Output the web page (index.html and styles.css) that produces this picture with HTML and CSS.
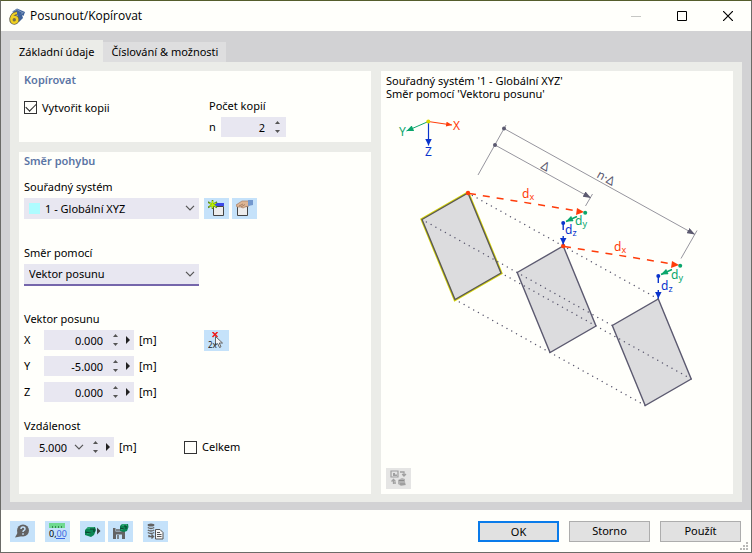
FILE: index.html
```html
<!DOCTYPE html>
<html lang="cs">
<head>
<meta charset="utf-8">
<title>Posunout/Kopírovat</title>
<link rel="stylesheet" href="styles.css">
</head>
<body>
<svg class="defs" width="0" height="0" aria-hidden="true">
  <defs>
    <symbol id="chevron" viewBox="0 0 10 6"><path d="M1 .8 5 4.8 9 .8" fill="none" stroke="#555" stroke-width="1.2"/></symbol>
    <symbol id="up" viewBox="0 0 5 3"><path d="M0 3 2.5 0 5 3Z" fill="#555"/></symbol>
    <symbol id="down" viewBox="0 0 5 3"><path d="M0 0 2.5 3 5 0Z" fill="#555"/></symbol>
    <symbol id="right" viewBox="0 0 4 8"><path d="M0 0 4 4 0 8Z" fill="#222"/></symbol>
  </defs>
</svg>
<div class="window">
  <header class="titlebar">
    <svg class="app-icon" width="16" height="17" viewBox="0 0 16 17" aria-hidden="true">
      <path d="M3 4 8 .5 16 4 14.500 8 13 7 14 10 10 14 8 6Z" fill="#3f6299"/>
      <path d="M4 3.500 8 1.500 14 5M12 6.500 14.500 4" fill="none" stroke="#7d98bd"/>
      <circle cx="5.300" cy="11.700" r="3" fill="#66624d" stroke="#66624d" stroke-width="4"/>
      <path d="M8 5Q3 5.500 2.200 11" fill="none" stroke="#66624d" stroke-width="3.600"/>
      <path d="M8 5Q3 5.500 2.200 11" fill="none" stroke="#f0d020" stroke-width="2.200"/>
      <circle cx="5.300" cy="11.800" r="2.900" fill="#77704a" stroke="#f0d020" stroke-width="2.400"/>
    </svg>
    <h1 class="title">Posunout/Kopírovat</h1>
    <div class="window-buttons">
      <button class="win-btn" type="button" aria-label="Minimalizovat" disabled><svg width="10" height="10" viewBox="0 0 10 10"><path d="M0 5.500H10" stroke="#c6c7c4"/></svg></button>
      <button class="win-btn" type="button" aria-label="Maximalizovat"><svg width="10" height="10" viewBox="0 0 10 10"><path d="M.5.5H9.500V9.500H.5Z" fill="none" stroke="#000"/></svg></button>
      <button class="win-btn" type="button" aria-label="Zavřít"><svg width="10" height="10" viewBox="0 0 10 10"><path d="M0 0 10 10M10 0 0 10" stroke="#000" stroke-width="1.200"/></svg></button>
    </div>
  </header>

  <main class="body">
    <div class="tabs" role="tablist">
      <button class="tab tab-active" role="tab" aria-selected="true" type="button">Základní údaje</button>
      <button class="tab" role="tab" aria-selected="false" type="button">Číslování &amp; možnosti</button>
    </div>
    <div class="page" role="tabpanel">
      <div class="column">
        <section class="panel">
          <h2 class="heading">Kopírovat</h2>
          <div class="copy-row">
            <label class="check"><input type="checkbox" checked>Vytvořit kopii</label>
            <div class="copies">
              <label class="label" for="count">Počet kopií</label>
              <div class="row">
                <label class="count-name" for="count">n</label>
                <div class="spin spin-count">
                  <input id="count" type="text" value="2">
                  <span class="steps"><button type="button" aria-label="Více"><svg width="5" height="3"><use href="#up"/></svg></button><button type="button" aria-label="Méně"><svg width="5" height="3"><use href="#down"/></svg></button></span>
                </div>
              </div>
            </div>
          </div>
        </section>

        <section class="panel panel-grow">
          <h2 class="heading">Směr pohybu</h2>
          <div class="field">
            <label class="label" for="system">Souřadný systém</label>
            <div class="row">
              <div class="select has-chip">
                <span class="chip"></span>
                <select id="system"><option>1 - Globální XYZ</option></select>
                <svg class="chevron" width="10" height="6"><use href="#chevron"/></svg>
              </div>
              <div class="tools">
                <button class="tool" type="button" aria-label="Nový souřadný systém">
                  <svg width="17" height="17" viewBox="0 0 17 17"><path d="M5 3H16V6H5Z" fill="#3b49e8"/><path d="M5.500 6.500H15.500V15.500H5.500Z" fill="#ececec" stroke="#444"/><path d="M4.500 0V9M0 2 9 7.500M9 2 0 7.500" stroke="#5b8a1c" stroke-width="1.600"/><path d="M4.500 1V8M1.500 3 8 6.500M8 3 1.500 6.500" stroke="#b8f000" stroke-width="1.300"/></svg>
                </button>
                <button class="tool" type="button" aria-label="Upravit souřadný systém">
                  <svg width="17" height="17" viewBox="0 0 17 17"><path d="M1 4H12V7H1Z" fill="#3b49e8"/><path d="M1.500 6.500H11.500V15.500H1.500Z" fill="#ececec" stroke="#444"/><path d="M0 5 6 1 13 1 13 6 9 7 7 8 5 7 1 7Z" fill="#ddb594" stroke="#a67e64" stroke-width=".7"/><path d="M3 6 7 4M5 7 9 4.500" stroke="#9a735b" stroke-width=".8"/><path d="M12 0H17V5L12 6Z" fill="#7398ce"/></svg>
                </button>
              </div>
            </div>
          </div>
          <div class="field">
            <label class="label" for="direction">Směr pomocí</label>
            <div class="select select-focus">
              <select id="direction"><option>Vektor posunu</option></select>
              <svg class="chevron" width="10" height="6"><use href="#chevron"/></svg>
            </div>
          </div>
          <fieldset class="vector">
            <legend class="label">Vektor posunu</legend>
            <div class="vector-row">
              <div class="vector-inputs">
                <div class="row"><label class="axis" for="vx">X</label>
                  <div class="spin"><input id="vx" type="text" value="0.000"><span class="steps"><button type="button" aria-label="Více"><svg width="5" height="3"><use href="#up"/></svg></button><button type="button" aria-label="Méně"><svg width="5" height="3"><use href="#down"/></svg></button></span><button class="more" type="button" aria-label="Možnosti X"><svg width="4" height="8"><use href="#right"/></svg></button></div>
                  <span class="unit">[m]</span></div>
                <div class="row"><label class="axis" for="vy">Y</label>
                  <div class="spin"><input id="vy" type="text" value="-5.000"><span class="steps"><button type="button" aria-label="Více"><svg width="5" height="3"><use href="#up"/></svg></button><button type="button" aria-label="Méně"><svg width="5" height="3"><use href="#down"/></svg></button></span><button class="more" type="button" aria-label="Možnosti Y"><svg width="4" height="8"><use href="#right"/></svg></button></div>
                  <span class="unit">[m]</span></div>
                <div class="row"><label class="axis" for="vz">Z</label>
                  <div class="spin"><input id="vz" type="text" value="0.000"><span class="steps"><button type="button" aria-label="Více"><svg width="5" height="3"><use href="#up"/></svg></button><button type="button" aria-label="Méně"><svg width="5" height="3"><use href="#down"/></svg></button></span><button class="more" type="button" aria-label="Možnosti Z"><svg width="4" height="8"><use href="#right"/></svg></button></div>
                  <span class="unit">[m]</span></div>
              </div>
              <button class="tool" type="button" aria-label="Vybrat dva body">
                <svg width="17" height="17" viewBox="0 0 17 17"><path d="M4.500 0 9.500 5M9.500 0 4.500 5" stroke="#f01818" stroke-width="1.500"/><path d="M7.500 4.500V13.500L9.700 11.500 11.500 15.500 13 14.800 11.300 11H14.500Z" fill="#f4f4f6" stroke="#555" stroke-width=".9"/><text x="0" y="15.500" class="two-x">2x</text></svg>
              </button>
            </div>
          </fieldset>
          <div class="field">
            <label class="label" for="distance">Vzdálenost</label>
            <div class="row distance-row">
              <div class="distance">
                <div class="spin spin-distance">
                  <input id="distance" type="text" value="5.000">
                  <button class="drop" type="button" aria-label="Seznam hodnot"><svg width="10" height="6"><use href="#chevron"/></svg></button>
                  <span class="steps"><button type="button" aria-label="Více"><svg width="5" height="3"><use href="#up"/></svg></button><button type="button" aria-label="Méně"><svg width="5" height="3"><use href="#down"/></svg></button></span>
                  <button class="more" type="button" aria-label="Možnosti vzdálenosti"><svg width="4" height="8"><use href="#right"/></svg></button>
                </div>
                <span class="unit">[m]</span>
              </div>
              <label class="check"><input type="checkbox">Celkem</label>
            </div>
          </div>
        </section>
      </div>

      <section class="panel preview">
        <p class="caption">Souřadný systém '1 - Globální XYZ'<br>Směr pomocí 'Vektoru posunu'</p>
        <svg class="diagram" viewBox="381 101 352 366" role="img" aria-label="Schéma posunu">
          <defs>
            <marker id="grey" viewBox="0 0 8 6" refX="8" refY="3" markerWidth="8" markerHeight="6" markerUnits="userSpaceOnUse" orient="auto"><path d="M0 0 8 3 0 6Z" fill="#5c5a70"/></marker>
            <marker id="red" viewBox="0 0 7 6" refX="7" refY="3" markerWidth="7" markerHeight="5" markerUnits="userSpaceOnUse" orient="auto"><path d="M0 0 7 3 0 6Z" fill="#ff3c0a"/></marker>
            <marker id="green" viewBox="0 0 7 6" refX="7" refY="3" markerWidth="8" markerHeight="6" markerUnits="userSpaceOnUse" orient="auto"><path d="M0 0 7 3 0 6Z" fill="#0aa66c"/></marker>
            <marker id="blue" viewBox="0 0 7 7" refX="7" refY="3.500" markerWidth="7" markerHeight="7" markerUnits="userSpaceOnUse" orient="auto"><path d="M0 0 7 3.500 0 7Z" fill="#0a34cc"/></marker>
          </defs>
          <g fill="none">
            <path d="M428.300 121.500 452 125" stroke="#ff3c0a" marker-end="url(#red)"/>
            <path d="M428.300 121.500 406.500 131" stroke="#0aa66c" marker-end="url(#green)"/>
            <path d="M428.500 121.500V145.500" stroke="#0a34cc" stroke-width="1.200" marker-end="url(#blue)"/>
          </g>
          <circle cx="428.300" cy="121.500" r="2" fill="#dbd800"/>
          <text class="t red" x="453" y="130">X</text>
          <text class="t green" x="399" y="136">Y</text>
          <text class="t blue" x="425" y="156">Z</text>

          <g fill="none" stroke="#96959e">
            <path d="M506 125 478 175M592.500 194 585.500 206M697 230.500 681 258.500"/>
            <path d="M504 128.500 695 234.500" marker-end="url(#grey)"/>
            <path d="M495 145 591 198" marker-end="url(#grey)"/>
          </g>
          <circle cx="504" cy="128.500" r="2" fill="#5c5a70"/>
          <circle cx="495" cy="145" r="2" fill="#5c5a70"/>
          <text class="t delta" transform="translate(540 168) rotate(29)">Δ</text>
          <text class="t delta" transform="translate(596 177) rotate(29)">n·Δ</text>

          <g fill="#dcdcde" stroke-linejoin="miter">
            <path d="M468 193 501 273 455 299.500 422 219.500Z" stroke="#d8d60a" stroke-width="3"/>
            <path d="M468 193 501 273 455 299.500 422 219.500Z" stroke="#5c5a50" stroke-width="1.400"/>
            <path d="M563.200 246 596 326 550 352.500 517.200 272.500Z" stroke="#5c5a70" stroke-width="1.400"/>
            <path d="M658.300 299 691.200 379 645.200 405.500 612.300 325.500Z" stroke="#5c5a70" stroke-width="1.400"/>
          </g>
          <g stroke="#5c5a70" stroke-width="1.500" stroke-linecap="round" stroke-dasharray="0 5.450" stroke-dashoffset="-5">
            <path d="M468 193 658.300 299"/><path d="M422 219.500 612.300 325.500"/><path d="M501 273 691.200 379"/><path d="M455 299.500 645.200 405.500"/>
          </g>

          <g stroke="#ff3c0a" stroke-width="1.500" stroke-dasharray="7 7" fill="none">
            <path d="M469 193.500 578 211"/><path d="M564 246.500 673 264"/>
          </g>
          <path d="M577 208 584 212 576 215ZM672 261 679 265 671 268Z" fill="#ff3c0a"/>
          <circle cx="468" cy="193" r="2.200" fill="#ff3c0a"/>
          <circle cx="563.200" cy="246" r="2.200" fill="#ff3c0a"/>
          <g fill="none" stroke="#0aa66c" stroke-width="1.500">
            <path d="M577 216.500 566 221.500" marker-end="url(#green)"/><path d="M672 269.500 661 274.500" marker-end="url(#green)"/>
          </g>
          <g fill="none" stroke="#0a34cc" stroke-width="1.400">
            <path d="M563.200 223V230M563.200 236V244.500" marker-end="url(#blue)"/><path d="M658.300 276V283M658.300 290V298.500" marker-end="url(#blue)"/>
          </g>
          <circle cx="585.200" cy="212.700" r="2" fill="#0aa66c"/><circle cx="680.200" cy="265.700" r="2" fill="#0aa66c"/>
          <circle cx="563.200" cy="223" r="2" fill="#0a34cc"/><circle cx="658.300" cy="276" r="2" fill="#0a34cc"/>
          <text class="t red" x="522" y="198">d<tspan class="sub" dy="2">x</tspan></text>
          <text class="t red" x="614" y="251">d<tspan class="sub" dy="2">x</tspan></text>
          <text class="t green" x="575" y="225">d<tspan class="sub" dy="2">y</tspan></text>
          <text class="t green" x="671" y="279">d<tspan class="sub" dy="2">y</tspan></text>
          <text class="t blue" x="565" y="234">d<tspan class="sub" dy="2">z</tspan></text>
          <text class="t blue" x="661" y="290">d<tspan class="sub" dy="2">z</tspan></text>
        </svg>
        <button class="tool tool-off" type="button" aria-label="Přepnout zobrazení" disabled>
          <svg width="17" height="17" viewBox="0 0 17 17"><path d="M1 1H8V7H1Z" fill="none" stroke="#a0a0a0" stroke-width="1.200"/><path d="M3 6V3H5V4.500H7V6Z" fill="#a0a0a0"/><path d="M10 2H14V5M12.200 4 14 6 16 4M3.500 14V10M1.500 11.500 3.500 9.500 5.500 11.500M3.500 13H6" fill="none" stroke="#a0a0a0" stroke-width="1.300"/><path d="M8 10 12 8 15 9V12L16 15 11 16 8 14Z" fill="#b2b2b2"/><path d="M9 10.500H14M10 14H15" stroke="#8c8c8c"/></svg>
        </button>
      </section>
    </div>
  </main>

  <footer class="footer">
    <div class="footer-tools">
      <button class="tool" type="button" aria-label="Nápověda">
        <svg width="17" height="17" viewBox="0 0 17 17"><circle cx="9" cy="7.500" r="6" fill="#636363"/><path d="M4 9 1 14.500 9 13Z" fill="#636363"/><path d="M7 6Q7 4 9 4T11 6Q11 7 9.700 7.600Q9 8 9 9" fill="none" stroke="#c5e2fa" stroke-width="1.500"/><path d="M9 10.200V11.700" stroke="#c5e2fa" stroke-width="1.600"/></svg>
      </button>
      <button class="tool" type="button" aria-label="Jednotky a desetinná místa">
        <svg width="19" height="17" viewBox="0 0 19 17"><path d="M1 0H17V5H1Z" fill="#6fda91"/><path d="M4.500 3V5M7.500 3V5M10.500 3V5M13.500 3V5" stroke="#348a50"/><text x="1" y="14" class="digits">0,<tspan fill="#3b66e0">00</tspan></text><path d="M8 15.500H17" stroke="#3b66e0"/></svg>
      </button>
      <button class="tool" type="button" aria-label="Načíst nastavení">
        <svg width="17" height="17" viewBox="0 0 17 17"><path d="M1 7 4 4 11 4 12 7 10 12 7 14 1 12Z" fill="#0b8553"/><path d="M3 5 10 5M3 10H7" stroke="#44c18b"/><path d="M1 9 7 10M6 6H10V9" fill="none" stroke="#093f2b" stroke-width="1.200"/><path d="M13 4.500 16.500 8 13 11.500Z" fill="#444"/></svg>
      </button>
      <button class="tool" type="button" aria-label="Uložit nastavení">
        <svg width="17" height="17" viewBox="0 0 17 17"><path d="M1 5H11L13 7V16H1Z" fill="#636363"/><path d="M3.500 5H9.500V8.500H3.500ZM4 11.500H10V16H4Z" fill="#c5e2fa"/><path d="M4 7H9M6 12V16" stroke="#636363" stroke-width="1.500"/><path d="M8 3 10 1 16 1 16.500 4 15 8 12 9 8 8Z" fill="#0b8553"/><path d="M10 2H15M9 6H12" stroke="#44c18b"/><path d="M8 5 12 6M12 3H14V6" fill="none" stroke="#093f2b"/></svg>
      </button>
      <button class="tool" type="button" aria-label="Databáze a protokol">
        <svg width="17" height="17" viewBox="0 0 17 17"><ellipse cx="4" cy="2" rx="3.400" ry="1.500" fill="#636363"/><path d="M.8 4.500Q4 6.500 7.200 4.500M.8 7Q4 9 7.200 7M.8 9.500Q4 11.500 7.200 9.500M2 12V13.500H6M4.500 11.500 6.500 13.500 4.500 15.500" fill="none" stroke="#636363" stroke-width="1.400"/><path d="M8.500 6.500H13L16 9.500V16H8.500Z" fill="#f6f6f6" stroke="#555"/><path d="M10 9.500H13M10 11.500H14.500M10 13.500H14.500" stroke="#555"/></svg>
      </button>
    </div>
    <div class="actions">
      <button class="btn btn-default" type="button">OK</button>
      <button class="btn" type="button">Storno</button>
      <button class="btn" type="button">Použít</button>
    </div>
    <svg class="grip" width="8" height="8" viewBox="0 0 8 8" aria-hidden="true"><path d="M6 0H8V2H6ZM3 3H5V5H3ZM6 3H8V5H6ZM0 6H2V8H0ZM3 6H5V8H3ZM6 6H8V8H6Z" fill="#b9b9b7"/></svg>
  </footer>
</div>
</body>
</html>
```
FILE: styles.css
```css
* { box-sizing: border-box; }

body {
  margin: 0;
  color: #000;
  font: 11px/18px "Noto Sans", "Open Sans", sans-serif;
}

button, input, select { font: inherit; color: inherit; }
button { margin: 0; padding: 0; border: 0; background: none; }
h1, h2, p { margin: 0; font: inherit; }
svg { display: block; }
.defs { position: absolute; }

.window {
  display: flex;
  flex-direction: column;
  min-height: 100vh;
  border: 1px solid #6b6b67;
  border-top-color: #555d2c;
  background: #fffffb;
}

.titlebar {
  display: flex;
  align-items: center;
  height: 30px;
  padding-left: 8px;
}
.title { flex: 1; margin-left: 5px; font-family: "Open Sans", sans-serif; font-size: 12px; }
.window-buttons { display: flex; }
.win-btn {
  display: grid;
  place-items: center;
  width: 46px;
  height: 28px;
}

.body {
  flex: 1;
  display: flex;
  flex-direction: column;
  padding: 9px 9px 8px;
  background: #d2d2d4;
}
.tabs { display: flex; align-items: flex-end; }
.tab { height: 20px; padding: 0 8px; background: #dededf; line-height: 20px; }
.tab-active { height: 22px; padding: 2px 9px 0; background: #ebece8; }

.page {
  flex: 1;
  display: grid;
  grid-template-columns: 1fr 1fr;
  gap: 10px;
  padding: 9px 9px 8px;
  background: #ebece8;
}
.column { display: flex; flex-direction: column; gap: 10px; }
.panel { padding: 0 5px 5px; background: #fffffb; }
.panel-grow { flex: 1; }
.heading {
  margin-bottom: 8px;
  color: #5b75a5;
  font-weight: 600;
}

.row { display: flex; align-items: center; }
.label { display: block; margin-bottom: 2px; padding: 0; }
.field { margin-bottom: 25px; }

.copy-row { display: flex; }
.copy-row .check { width: 185px; height: 21px; }
.count-name { width: 12px; }

.check { display: flex; align-items: center; gap: 5px; }
.check input {
  appearance: none;
  display: grid;
  place-items: center;
  width: 13px;
  height: 13px;
  margin: 0;
  border: 1px solid #333;
}
.check input:checked::before {
  content: "";
  width: 9px;
  height: 5px;
  margin-bottom: 3px;
  border: solid #222;
  border-width: 0 0 1px 1px;
  transform: rotate(-45deg);
}

.spin {
  display: flex;
  align-items: center;
  width: 90px;
  height: 20px;
  background: #e8e7f1;
}
.spin input {
  flex: 1;
  min-width: 0;
  height: 20px;
  padding: 0;
  border: 0;
  outline: 0;
  background: none;
  text-align: right;
}
.spin-count { width: 65px; }
.spin-count .steps { margin-right: 6px; margin-left: 10px; }
.spin-distance .drop { margin-left: 7px; }
.spin-distance .steps { margin-left: 9px; }
.steps { display: grid; gap: 6px; margin-left: 10px; }
.more { margin: 0 4px 0 8px; }
.unit { margin-left: 5px; }

.select { position: relative; width: 175px; }
.select select {
  appearance: none;
  display: block;
  width: 100%;
  height: 21px;
  padding: 0 5px;
  border: 0;
  border-radius: 0;
  background: #e8e7f1;
}
.select-focus select {
  border-bottom: 1px solid #7566ab;
  box-shadow: 0 1px 0 #7566ab;
}
.has-chip select { padding-left: 21px; }
.chip {
  position: absolute;
  top: 5px;
  left: 5px;
  width: 11px;
  height: 11px;
  background: #aefcff;
}
.chevron { position: absolute; top: 7px; right: 4px; pointer-events: none; }

.tools { display: flex; gap: 3px; margin-left: 5px; }
.tool {
  display: grid;
  place-items: center;
  width: 25px;
  height: 21px;
  background: #c5e2fa;
}
.tool-off { background: #e5e5e4; }

.vector { margin: 0 0 15px; padding: 0; border: 0; }
.vector-row { display: flex; align-items: flex-start; }
.vector-inputs { display: grid; gap: 6px; width: 180px; }
.axis { width: 20px; }
.distance-row .distance { display: flex; align-items: center; width: 160px; }

.preview { display: flex; flex-direction: column; padding-top: 3px; }
.caption { line-height: 13px; }
.diagram { flex: 1; width: calc(100% + 10px); min-height: 0; margin: 0 -5px; }

.t { font-size: 12px; }
.sub { font-size: 9px; }
.red { fill: #ff3c0a; }
.green { fill: #0aa66c; }
.blue { fill: #0a34cc; }
.delta { fill: #5c5a70; }
.two-x { font-size: 8px; fill: #222; }
.digits { font-size: 9px; }

.footer {
  position: relative;
  display: flex;
  align-items: center;
  justify-content: space-between;
  height: 42px;
  padding: 0 10px 0 9px;
}
.footer-tools { display: flex; gap: 10px; }
.footer-tools .tool:nth-child(4) { margin-left: -7px; }
.actions { display: flex; gap: 10px; }
.btn {
  width: 81px;
  height: 21px;
  border: 1px solid #adadad;
  background: #e1e1e1;
}
.btn-default { border: 2px solid #0a7bea; }
.grip { position: absolute; right: 3px; bottom: 2px; }
```
